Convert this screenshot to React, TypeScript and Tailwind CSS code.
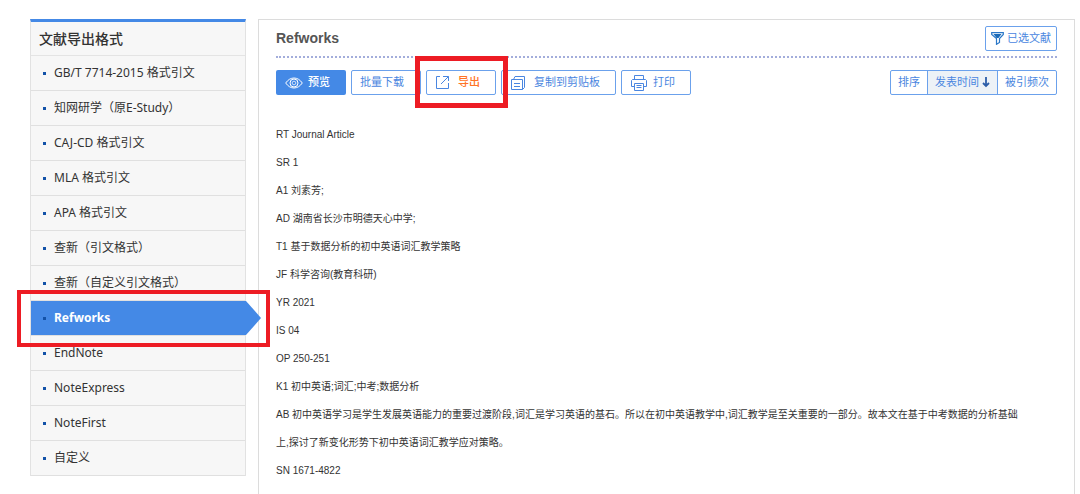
import { useState } from 'react';
import clsx from 'clsx';

const FORMATS = [
  'GB/T 7714-2015 格式引文',
  '知网研学（原E-Study）',
  'CAJ-CD 格式引文',
  'MLA 格式引文',
  'APA 格式引文',
  '查新（引文格式）',
  '查新（自定义引文格式）',
  'Refworks',
  'EndNote',
  'NoteExpress',
  'NoteFirst',
  '自定义',
];

const RECORD = [
  'RT Journal Article',
  'SR 1',
  'A1 刘素芳;',
  'AD 湖南省长沙市明德天心中学;',
  'T1 基于数据分析的初中英语词汇教学策略',
  'JF 科学咨询(教育科研)',
  'YR 2021',
  'IS 04',
  'OP 250-251',
  'K1 初中英语;词汇;中考;数据分析',
];

const toolButton =
  'flex h-[25px] items-center rounded-xs border border-[#6ba1ec] bg-white text-[11px] text-[#4a86e0] whitespace-nowrap';

function EyeIcon() {
  return (
    <svg width="18" height="12" viewBox="0 0 18 12" fill="none" stroke="currentColor" aria-hidden>
      <path d="M.7 6C3 2.7 5.800 1 9 1s6 1.700 8.300 5C15 9.300 12.200 11 9 11S3 9.300.7 6Z" />
      <circle cx="9" cy="6" r="4" />
      <circle cx="9" cy="6" r="1.800" strokeWidth=".7" />
    </svg>
  );
}

function ExportIcon() {
  return (
    <svg width="13" height="13" viewBox="0 0 13 13" fill="none" stroke="currentColor" aria-hidden>
      <path d="M4 .5H.5v12h12V7M7 .5h5.500V5M12.500.5 5 8" />
    </svg>
  );
}

function CopyIcon() {
  return (
    <svg width="14" height="14" viewBox="0 0 14 14" fill="none" stroke="currentColor" aria-hidden>
      <path d="M2.500 3.500 4 .5h9.500v11l-2 2" />
      <path d="M.5 3.500h11v10H.5zM3 7.500h6M3 10.500h6" />
    </svg>
  );
}

function PrintIcon() {
  return (
    <svg width="16" height="16" viewBox="0 0 16 16" fill="none" stroke="currentColor" aria-hidden>
      <path d="M3.500 4.500v-4h9v4" />
      <path d="M3.500 11.500h-3v-6l1-1h13l1 1v6h-3" />
      <path d="M3.500 8.500h9v7h-9zM5.500 10.500h5M5.500 12.500h5" />
    </svg>
  );
}

function FilterIcon() {
  return (
    <svg width="13" height="13" viewBox="0 0 13 13" aria-hidden>
      <path
        d="M.7.700h11.600v1.800L8.500 6.500v4L5.500 12.300V6.500L.7 2.500Z"
        fill="#fff"
        stroke="#2b78c8"
        strokeWidth="1.200"
      />
      <path d="M2.500 2h8L7.500 6h-2Z" fill="#1c6bb8" />
    </svg>
  );
}

function DownArrow() {
  return (
    <svg width="8" height="11" viewBox="0 0 8 11" fill="none" stroke="#2c5da8" strokeWidth="1.800" aria-hidden>
      <path d="M4 0v9M1 6l3 3 3-3" />
    </svg>
  );
}

export default function App() {
  const [active, setActive] = useState('Refworks');
  const [sort, setSort] = useState('time');

  return (
    <div className="flex min-h-screen items-stretch gap-3 bg-white pt-[19px] pr-[5px] pl-[30px] font-['Liberation_Sans','Noto_Sans_CJK_SC',sans-serif] text-[#333]">
      <aside className="w-[216px] shrink-0 self-start border-x border-t-3 border-x-[#e2e2e2] border-t-[#4489e6] bg-[#f7f7f7] font-['Noto_Sans','Noto_Sans_CJK_SC',sans-serif]">
        <h2 className="flex h-[34px] items-center border-b border-[#e4e4e4] px-2 text-sm font-medium">文献导出格式</h2>
        <ul>
          {FORMATS.map((name) => {
            const selected = name === active;
            return (
              <li key={name} className="relative h-[35px] border-b border-[#e0e0e0]">
                <a
                  href="#"
                  onClick={(e) => {
                    e.preventDefault();
                    setActive(name);
                  }}
                  className={clsx(
                    'flex h-full items-center gap-2 pl-3 text-xs whitespace-nowrap',
                    selected && 'bg-[#4489e6] font-bold text-white'
                  )}
                >
                  <span className="size-[3px] bg-[#1352a8]" />
                  {name}
                </a>
                {selected && (
                  <>
                    <svg
                      className="absolute top-0 left-full z-10"
                      width="16"
                      height="34"
                      viewBox="0 0 16 34"
                      fill="#4489e6"
                      aria-hidden
                    >
                      <path d="M0 0h1l15 17L1 34H0Z" />
                    </svg>
                    <div className="pointer-events-none absolute -top-[11px] -left-[14px] z-20 h-[57px] w-[253px] border-4 border-[#ed1c24]" />
                  </>
                )}
              </li>
            );
          })}
        </ul>
      </aside>

      <main className="min-w-0 flex-1 border border-b-0 border-[#dcdcdc] px-[17px] pt-[6px] pb-2">
        <div className="flex h-8 items-start justify-between border-b-2 border-dotted border-[#a3addb]">
          <h1 className="text-sm leading-6 font-bold text-[#555]">{active}</h1>
          <button type="button" className={clsx(toolButton, 'gap-[3px] px-[5px]')}>
            <FilterIcon />
            已选文献
          </button>
        </div>

        <div className="mt-3 flex items-center justify-between">
          <div className="flex gap-[5px]">
            <button
              type="button"
              className="flex h-[25px] w-[70px] items-center gap-[5px] rounded-xs bg-[#4489e6] pl-[9px] text-[11px] font-medium whitespace-nowrap text-white"
            >
              <EyeIcon />
              预览
            </button>
            <button type="button" className={clsx(toolButton, 'w-[70px] pl-2')}>
              批量下载
            </button>
            <div className="relative">
              <button type="button" className={clsx(toolButton, 'w-[70px] gap-[9px] pl-[9px]')}>
                <ExportIcon />
                <span className="font-medium text-[#ff7426]">导出</span>
              </button>
              <div className="pointer-events-none absolute -top-[14px] -left-[11px] z-10 h-[52px] w-[93px] border-[5px] border-[#ed1c24]" />
            </div>
            <button type="button" className={clsx(toolButton, 'w-[115px] gap-[9px] pl-[9px]')}>
              <CopyIcon />
              复制到剪贴板
            </button>
            <button type="button" className={clsx(toolButton, 'w-[70px] gap-[6px] pl-[9px]')}>
              <PrintIcon />
              打印
            </button>
          </div>

          <div className="flex h-[25px] divide-x divide-[#6ba1ec] rounded-xs border border-[#6ba1ec] text-[11px] whitespace-nowrap text-[#4a86e0]">
            <span className="flex items-center px-[7px]">排序</span>
            <button
              type="button"
              onClick={() => setSort('time')}
              className={clsx('flex items-center gap-[3px] px-[7px]', sort === 'time' && 'bg-[#edf2f7]')}
            >
              发表时间
              <DownArrow />
            </button>
            <button
              type="button"
              onClick={() => setSort('cited')}
              className={clsx('flex items-center px-[7px]', sort === 'cited' && 'bg-[#edf2f7]')}
            >
              被引频次
            </button>
          </div>
        </div>

        <div className="mt-[26px] text-[10px] leading-7">
          {RECORD.map((line) => (
            <p key={line}>{line}</p>
          ))}
          <p>
            AB 初中英语学习是学生发展英语能力的重要过渡阶段,词汇是学习英语的基石。所以在初中英语教学中,词汇教学是至关重要的一部分。故本文在基于中考数据的分析基础
            <br />
            上,探讨了新变化形势下初中英语词汇教学应对策略。
          </p>
          <p>SN 1671-4822</p>
        </div>
      </main>
    </div>
  );
}
